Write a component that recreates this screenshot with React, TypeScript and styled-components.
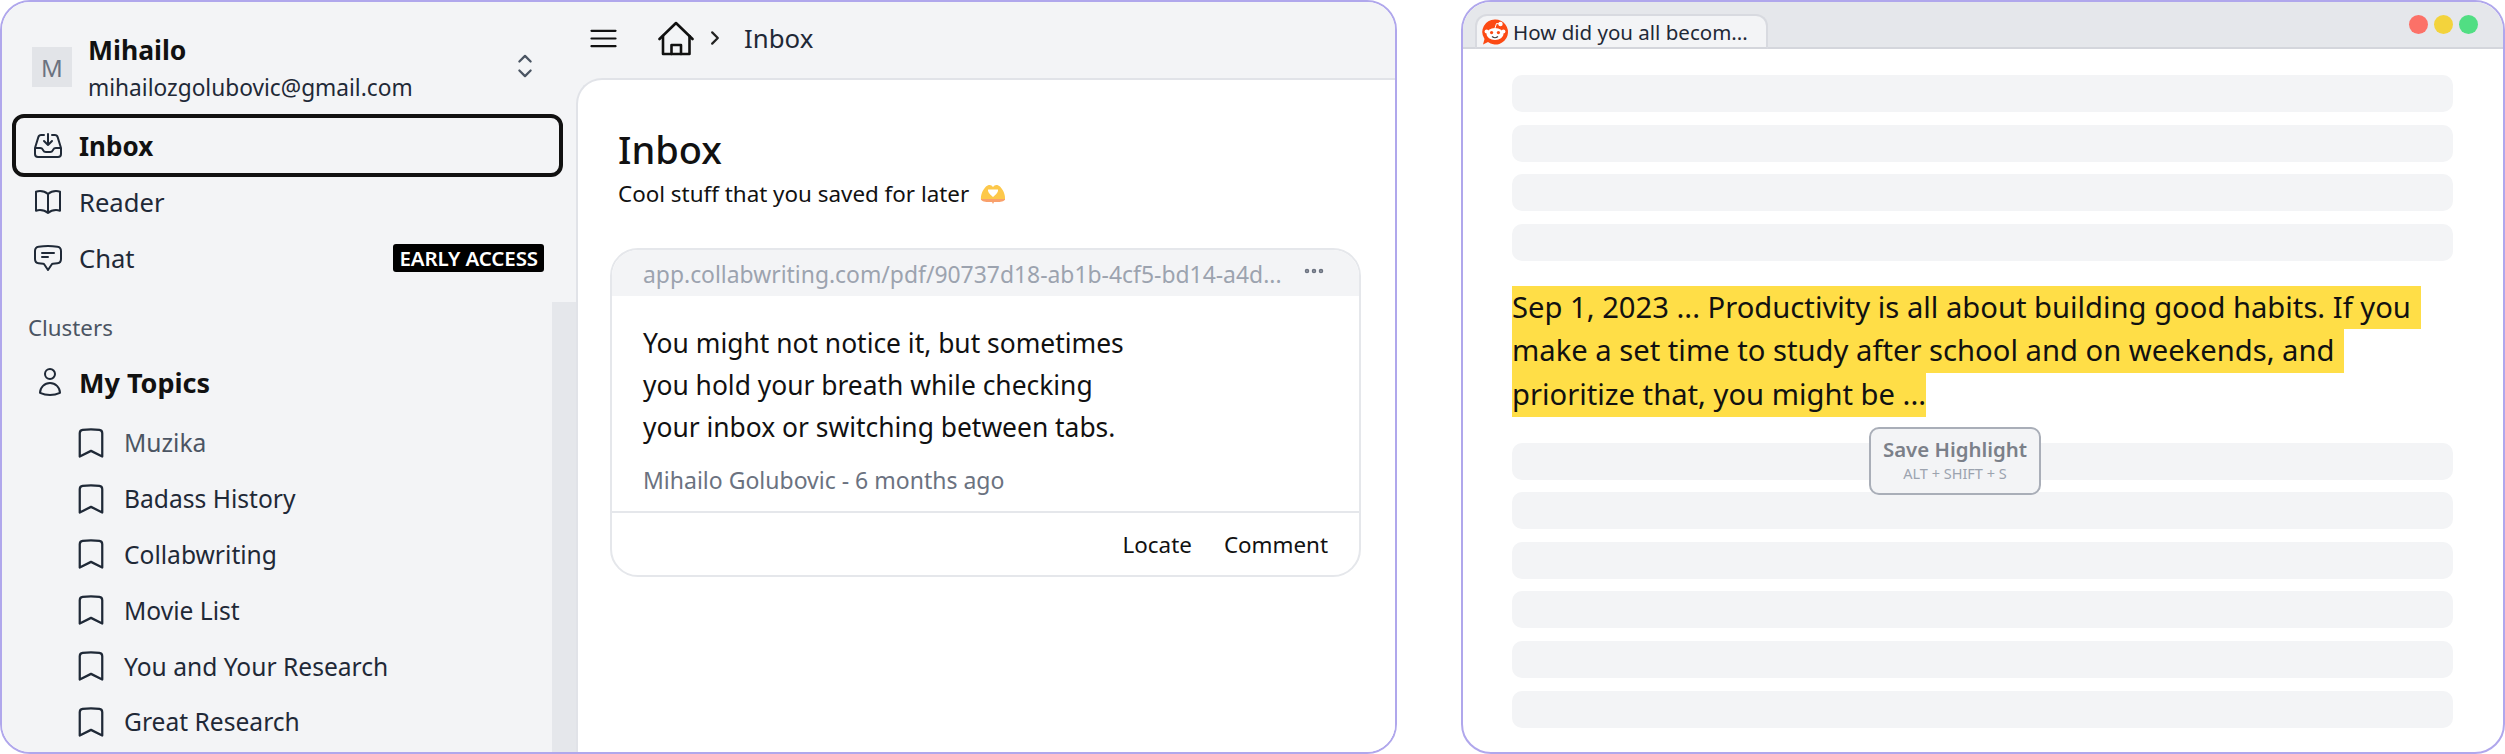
import React from "react";
import styled, { createGlobalStyle } from "styled-components";
import {
  HiOutlineInboxArrowDown,
  HiOutlineBookOpen,
  HiOutlineChatBubbleBottomCenterText,
  HiOutlineUser,
  HiOutlineBookmark,
  HiOutlineChevronUpDown,
  HiOutlineBars3,
  HiOutlineChevronRight,
  HiOutlineEllipsisHorizontal,
} from "react-icons/hi2";

const Global = createGlobalStyle`
  html, body { margin: 0; padding: 0; background: #fff; }
  * { box-sizing: border-box; }
  body { font-family: "Noto Sans", "Open Sans", sans-serif; color: #111827; }
`;

const Page = styled.div`
  display: flex;
  gap: 64px;
  width: 2505px;
  height: 754px;
`;

const Window = styled.section<{ $w: number }>`
  width: ${(p) => p.$w}px;
  height: 754px;
  border: 2px solid #b0a7ec;
  border-radius: 30px;
  overflow: hidden;
  display: flex;
  position: relative;
  background: #fff;
`;

const BrowserWindow = styled(Window)`
  flex-direction: column;
`;

const Sidebar = styled.aside`
  width: 574px;
  flex: none;
  background: #f3f4f6;
  display: flex;
  flex-direction: column;
`;

const Top = styled.div`
  height: 300px;
  padding: 0 13px 0 10px;
  flex: none;
`;

const Profile = styled.div`
  height: 112px;
  display: flex;
  align-items: flex-start;
  padding: 0 24px 0 20px;
`;

const Avatar = styled.div`
  width: 40px;
  height: 40px;
  background: #e2e4e8;
  color: #6b7280;
  font-size: 24px;
  display: flex;
  align-items: center;
  justify-content: center;
  margin-top: 45px;
  flex: none;
`;

const Who = styled.div`
  margin: 29px 0 0 16px;
  flex: 1;
`;

const Name = styled.div`
  font-size: 26.5px;
  font-weight: 700;
  line-height: 38px;
  color: #111;
`;

const Email = styled.div`
  font-size: 22.7px;
  line-height: 38px;
  color: #1f2937;
`;

const UpDown = styled(HiOutlineChevronUpDown)`
  width: 36px;
  height: 36px;
  color: #4b5563;
  flex: none;
  margin: 46px -4px 0 0;
`;

const NavRow = styled.div<{ $active?: boolean }>`
  display: flex;
  align-items: center;
  height: ${(p) => (p.$active ? "63px" : "56px")};
  margin-bottom: ${(p) => (p.$active ? "-3px" : "0")};
  padding: 0 19px 0 ${(p) => (p.$active ? "16px" : "20px")};
  border: ${(p) => (p.$active ? "4px solid #111" : "none")};
  border-radius: 12px;
  font-size: ${(p) => (p.$active ? "26px" : "25.6px")};
  font-weight: ${(p) => (p.$active ? 700 : 400)};
  color: ${(p) => (p.$active ? "#111" : "#1f2937")};
  svg {
    width: 32px;
    height: 32px;
    margin-right: 15px;
    flex: none;
    color: #1f2937;
  }
`;

const Badge = styled.span`
  margin-left: auto;
  background: #000;
  color: #fff;
  font-size: 20.5px;
  font-weight: 600;
  line-height: 28px;
  padding: 0 6px;
  border-radius: 3px;
  letter-spacing: -0.1px;
`;

const Lower = styled.div`
  flex: 1;
  display: flex;
  min-height: 0;
`;

const Clusters = styled.div`
  flex: 1;
  padding-top: 11px;
`;

const Track = styled.div`
  width: 24px;
  background: #e5e7eb;
  flex: none;
`;

const ClusterLabel = styled.div`
  font-size: 22.3px;
  line-height: 30px;
  color: #4b5563;
  padding-left: 26px;
`;

const TopicHead = styled.div`
  display: flex;
  align-items: center;
  height: 56px;
  margin: 11px 0 5px;
  padding-left: 32px;
  font-size: 27px;
  font-weight: 700;
  color: #111;
  svg {
    width: 32px;
    height: 32px;
    margin-right: 13px;
    color: #1f2937;
  }
`;

const Topic = styled.div<{ $muted?: boolean }>`
  display: flex;
  align-items: center;
  height: 55.8px;
  padding-left: 71px;
  font-size: 24.6px;
  color: ${(p) => (p.$muted ? "#4b5563" : "#1f2937")};
  svg {
    width: 36px;
    height: 36px;
    margin-right: 15px;
    color: #1f2937;
  }
`;

const Main = styled.main`
  flex: 1;
  min-width: 0;
  display: flex;
  flex-direction: column;
  background: #f3f4f6;
`;

const Header = styled.header`
  height: 76px;
  flex: none;
  display: flex;
  align-items: center;
  padding: 0 0 4px 10px;
  font-size: 25.8px;
  color: #1f2937;
`;

const Burger = styled(HiOutlineBars3)`
  width: 35px;
  height: 35px;
  color: #111;
  margin-right: 37px;
`;

const HomeIcon = styled.svg`
  width: 36px;
  height: 35px;
  color: #111;
  flex: none;
`;

const Crumb = styled(HiOutlineChevronRight)`
  width: 18px;
  height: 18px;
  margin: 0 20px 0 12px;
  color: #222;
  stroke-width: 3;
`;

const Panel = styled.div`
  flex: 1;
  background: #fff;
  border-top: 2px solid #e1e3e8;
  border-left: 2px solid #e1e3e8;
  border-top-left-radius: 26px;
  padding: 0 0 0 32px;
`;

const Title = styled.h1`
  margin: 45px 0 0 8px;
  font-size: 38px;
  line-height: 48px;
  font-weight: 500;
  color: #111;
`;

const Sub = styled.p`
  margin: 3px 0 0 8px;
  font-size: 22.4px;
  line-height: 36px;
  color: #111;
  display: flex;
  align-items: center;
  gap: 11px;
`;

const Card = styled.article`
  margin-top: 36px;
  width: 751px;
  border: 2px solid #e5e7eb;
  border-radius: 28px;
  overflow: hidden;
`;

const CardTop = styled.div`
  height: 46px;
  background: #f3f4f6;
  display: flex;
  align-items: center;
  justify-content: space-between;
  padding: 2px 34px 0 31px;
  color: #9ca3af;
  font-size: 22.9px;
  white-space: nowrap;
`;

const Dots = styled(HiOutlineEllipsisHorizontal)`
  width: 28px;
  height: 28px;
  color: #6b7280;
  flex: none;
  margin: -6px -3px 0 0;
  stroke-width: 2.4;
`;

const CardBody = styled.div`
  padding: 26px 31px 15px;
  border-bottom: 2px solid #e5e7eb;
`;

const Quote = styled.p`
  margin: 0;
  font-size: 26.4px;
  line-height: 42px;
  color: #111;
`;

const Meta = styled.div`
  margin-top: 16px;
  font-size: 23px;
  line-height: 32px;
  color: #6b7280;
`;

const Actions = styled.div`
  height: 62px;
  display: flex;
  align-items: center;
  justify-content: flex-end;
  gap: 32px;
  padding-right: 31px;
  font-size: 22.4px;
  color: #111;
`;

const TabStrip = styled.div`
  height: 47px;
  flex: none;
  background: #e5e7eb;
  border-bottom: 2px solid #d4d6dc;
  display: flex;
  align-items: flex-end;
  padding-left: 12px;
`;

const Tab = styled.div`
  width: 293px;
  height: 35px;
  margin-bottom: -2px;
  background: #f3f4f6;
  border: 2px solid #d8dae0;
  border-bottom-color: #d4d6dc;
  border-radius: 12px 12px 0 0;
  display: flex;
  align-items: center;
  gap: 5px;
  padding-left: 5px;
  font-size: 20.5px;
  color: #1f2937;
  white-space: nowrap;
`;

const Lights = styled.div`
  margin-left: auto;
  align-self: center;
  display: flex;
  gap: 6px;
  padding-right: 25px;
`;

const Light = styled.span<{ $c: string }>`
  width: 19px;
  height: 19px;
  border-radius: 50%;
  background: ${(p) => p.$c};
`;

const PageBody = styled.div`
  flex: 1;
  padding: 26px 50px 0 49px;
  position: relative;
`;

const Lines = styled.div`
  display: flex;
  flex-direction: column;
  gap: 12.6px;
`;

const Line = styled.div`
  height: 37px;
  background: #f3f4f6;
  border-radius: 10px;
`;

const Excerpt = styled.div`
  margin: 25px 0 26px;
  font-size: 29.2px;
  line-height: 43.6px;
  color: #111;
`;

const Highlight = styled.div<{ $trail?: boolean }>`
  width: fit-content;
  white-space: nowrap;
  background: #ffde47;
  padding-right: ${(p) => (p.$trail ? "10px" : "0")};
`;

const SaveTip = styled.div`
  position: absolute;
  left: 406px;
  top: 378px;
  width: 172px;
  height: 68px;
  background: #f3f4f6;
  border: 2px solid #a9aeb8;
  border-radius: 10px;
  display: flex;
  flex-direction: column;
  align-items: center;
  padding-top: 5px;
`;

const SaveTitle = styled.div`
  font-size: 20.4px;
  font-weight: 600;
  line-height: 30px;
  color: #7b8089;
`;

const SaveKeys = styled.div`
  font-size: 14.5px;
  line-height: 18px;
  color: #9ca3af;
`;

const HeartHands = () => (
  <svg width="26" height="20" viewBox="0 0 26 20">
    <path d="M1 16 C0.5 11 2.5 6 6 2.5 C7.5 1 10 0.5 11.5 1.5 L13 3 L14.5 1.5 C16 0.5 18.5 1 20 2.5 C23.5 6 25.5 11 25 16 Z" fill="#fdc84a" />
    <path d="M8 5.5 L18 5.5 C18.5 8 15.5 11 13 13 C10.5 11 7.5 8 8 5.5 Z" fill="#fff" />
    <path d="M1 15 H25 C25 17 22 18 18 18 L14 18 L13 20 L12 18 L8 18 C4 18 1 17 1 15 Z" fill="#f9a06b" />
  </svg>
);

const RedditLogo = () => (
  <svg width="26" height="26" viewBox="0 0 26 26">
    <path d="M13 0.5 A12.5 12.5 0 1 1 6 23 L1 25.5 L2.5 20 A12.5 12.5 0 0 1 13 0.5 Z" fill="#fc4a14" />
    <ellipse cx="13" cy="15" rx="8.5" ry="6" fill="#fff" />
    <circle cx="4.6" cy="12.5" r="2" fill="#fff" />
    <circle cx="21.4" cy="12.5" r="2" fill="#fff" />
    <circle cx="18.5" cy="5" r="2.2" fill="#fff" />
    <path d="M13 9 L14.5 4.5 L18 5" stroke="#fff" strokeWidth="1" fill="none" />
    <circle cx="9.6" cy="13.6" r="1.6" fill="#fc4a14" />
    <circle cx="16.4" cy="13.6" r="1.6" fill="#fc4a14" />
    <path d="M10 17.5 Q13 20 16 17.5" stroke="#444" strokeWidth="1.2" fill="none" />
  </svg>
);

const topics = ["Muzika", "Badass History", "Collabwriting", "Movie List", "You and Your Research", "Great Research"];

export default function App() {
  return (
    <>
      <Global />
      <Page>
        <Window $w={1397}>
          <Sidebar>
            <Top>
              <Profile>
                <Avatar>M</Avatar>
                <Who>
                  <Name>Mihailo</Name>
                  <Email>mihailozgolubovic@gmail.com</Email>
                </Who>
                <UpDown />
              </Profile>
              <NavRow $active>
                <HiOutlineInboxArrowDown />
                Inbox
              </NavRow>
              <NavRow>
                <HiOutlineBookOpen />
                Reader
              </NavRow>
              <NavRow>
                <HiOutlineChatBubbleBottomCenterText />
                Chat
                <Badge>EARLY ACCESS</Badge>
              </NavRow>
            </Top>
            <Lower>
              <Clusters>
                <ClusterLabel>Clusters</ClusterLabel>
                <TopicHead>
                  <HiOutlineUser />
                  My Topics
                </TopicHead>
                {topics.map((t, i) => (
                  <Topic key={t} $muted={i === 0}>
                    <HiOutlineBookmark />
                    {t}
                  </Topic>
                ))}
              </Clusters>
              <Track />
            </Lower>
          </Sidebar>
          <Main>
            <Header>
              <Burger />
              <HomeIcon viewBox="0 0 36 35" fill="none" stroke="currentColor" strokeWidth="2.6" strokeLinejoin="round" strokeLinecap="round">
                <path d="M1.5 18 L18 2 L34.5 18" />
                <path d="M5 15 V33 H31.5 V15" />
                <path d="M13.5 33 V24 H23 V33" />
              </HomeIcon>
              <Crumb />
              Inbox
            </Header>
            <Panel>
              <Title>Inbox</Title>
              <Sub>
                Cool stuff that you saved for later
                <HeartHands />
              </Sub>
              <Card>
                <CardTop>
                  <span>app.collabwriting.com/pdf/90737d18-ab1b-4cf5-bd14-a4d...</span>
                  <Dots />
                </CardTop>
                <CardBody>
                  <Quote>
                    You might not notice it, but sometimes
                    <br />
                    you hold your breath while checking
                    <br />
                    your inbox or switching between tabs.
                  </Quote>
                  <Meta>Mihailo Golubovic - 6 months ago</Meta>
                </CardBody>
                <Actions>
                  <span>Locate</span>
                  <span>Comment</span>
                </Actions>
              </Card>
            </Panel>
          </Main>
        </Window>
        <BrowserWindow $w={1044}>
          <TabStrip>
            <Tab>
              <RedditLogo />
              How did you all becom...
            </Tab>
            <Lights>
              <Light $c="#fc7168" />
              <Light $c="#f3d33c" />
              <Light $c="#51de83" />
            </Lights>
          </TabStrip>
          <PageBody>
            <Lines>
              <Line />
              <Line />
              <Line />
              <Line />
            </Lines>
            <Excerpt>
              <Highlight $trail>Sep 1, 2023 ... Productivity is all about building good habits. If you</Highlight>
              <Highlight $trail>make a set time to study after school and on weekends, and</Highlight>
              <Highlight>prioritize that, you might be ...</Highlight>
            </Excerpt>
            <Lines>
              <Line />
              <Line />
              <Line />
              <Line />
              <Line />
              <Line />
            </Lines>
            <SaveTip>
              <SaveTitle>Save Highlight</SaveTitle>
              <SaveKeys>ALT + SHIFT + S</SaveKeys>
            </SaveTip>
          </PageBody>
        </BrowserWindow>
      </Page>
    </>
  );
}
